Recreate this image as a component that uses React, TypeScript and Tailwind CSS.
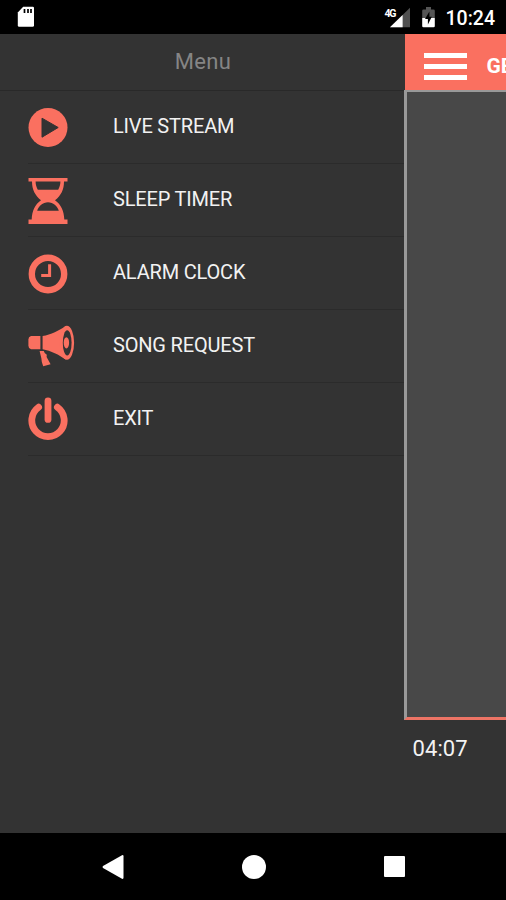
import React from 'react';

interface MenuItem {
    label: string;
    icon: React.ReactNode;
}

const menuItems: MenuItem[] = [
    {
        label: 'LIVE STREAM',
        icon: (
            <>
                <circle cx="20" cy="36.5" r="19.5" />
                <path d="M14 27.2 L30.2 36.5 L14 46.2Z" fill="#333333" stroke="#333333" strokeWidth="1" strokeLinejoin="round" />
            </>
        ),
    },
    {
        label: 'SLEEP TIMER',
        icon: (
            <path
                fillRule="evenodd"
                d="M.5 14H39.5V17.4H36C36 26 33 31 27 36.3C33 40.5 36 47 36.3 55.6H39.5V60H.5V55.6H3.7C4 47 7 40.5 13 36.3C7 31 4 26 4 17.4H.5ZM7.6 17.6C7.6 20.5 8.4 23.5 9.8 25.7H30.2C31.6 23.5 32.4 20.5 32.4 17.6ZM20 38.2C15 38.2 10.5 42 9.2 46.8H30.8C29.5 42 25 38.2 20 38.2Z"
            />
        ),
    },
    {
        label: 'ALARM CLOCK',
        icon: (
            <>
                <circle cx="20" cy="37" r="16.2" fill="none" stroke="#fa7060" strokeWidth="6.4" />
                <path d="M21.6 27.2V38.6H13.2" fill="none" stroke="#fa7060" strokeWidth="3" />
            </>
        ),
    },
    {
        label: 'SONG REQUEST',
        icon: (
            <>
                <path d="M3 26H12.4V39.2H3Q.4 38.6 .4 35.8V29.4Q.4 26.6 3 26Z" />
                <path d="M14.6 26C23 24.5 31 20.5 37.8 15.9V49.6C31 44.8 23 40.6 14.6 39.2Z" />
                <ellipse cx="38.9" cy="32.8" rx="7.2" ry="17" />
                <ellipse cx="39.2" cy="32.8" rx="4.4" ry="12.6" fill="#333333" />
                <ellipse cx="38.4" cy="32.8" rx="2.7" ry="5.6" />
                <path d="M11.6 41H15.8Q16.4 43.8 18.8 44.8L18.6 47L22.6 54.2L15.2 56.2Q13.4 52 13.4 48.5Z" />
            </>
        ),
    },
    {
        label: 'EXIT',
        icon: (
            <g fill="none" stroke="#fa7060" strokeWidth="6.8" strokeLinecap="round">
                <path d="M10.6 24.2A16.2 16.2 0 1 0 29.4 24.2" />
                <path d="M20 17.8V36.4" />
            </g>
        ),
    },
];

const StatusBar: React.FC = () => (
    <div className="flex h-[34px] items-center bg-black pl-[17px] pr-[11px] text-white">
        <svg width="18" height="22" viewBox="0 0 18 22">
            <path d="M6.2 .8H15.8Q17 .8 17 2V19.2Q17 20.8 15.6 20.8H2.2Q.8 20.8 .8 19.2V6.4Z" fill="white" />
            <path d="M7.5 3V7M11 3V7M14 3V7" stroke="black" strokeWidth="1.7" />
        </svg>
        <div className="flex-1" />
        <svg className="mr-[10px]" width="27" height="22" viewBox="0 0 27 22">
            <path d="M26 1.8V21.2H6Z" fill="#505050" />
            <path d="M18.6 8.9V21.2H6Z" fill="white" />
            <text x="0.5" y="10.5" fill="white" fontFamily="Roboto, sans-serif" fontSize="10.5" fontWeight="700" textLength="12">4G</text>
        </svg>
        <svg className="mr-[10px]" width="15" height="22" viewBox="0 0 15 22">
            <path d="M5 1H10V3.4H12.4Q13.8 3.4 13.8 4.8V12H1.2V4.8Q1.2 3.4 2.6 3.4H5Z" fill="#555555" />
            <path d="M1.2 12H13.8V20Q13.8 21.2 12.6 21.2H2.4Q1.2 21.2 1.2 20Z" fill="white" />
            <path d="M8.4 5.4L4 13H6.9V18.4L10.8 10.8H8.4Z" fill="black" />
        </svg>
        <span className="pt-[3px] text-[19.5px] font-medium leading-none">10:24</span>
    </div>
);

const Drawer: React.FC = () => (
    <nav className="w-[404px] shrink-0 bg-[#333333]">
        <h1 className="flex h-[57px] items-center justify-center border-b border-[#292929] text-[22px] text-[#858585]">
            <span className="pb-[2px] pl-[2px] tracking-[0.3px]">Menu</span>
        </h1>
        <ul className="pl-7">
            {menuItems.map((item) => (
                <li key={item.label} className="flex h-[73px] items-center border-b border-[#2b2b2b]">
                    <svg className="mr-[37px] shrink-0" width="48" height="72" viewBox="0 0 48 72" fill="#fa7060">
                        {item.icon}
                    </svg>
                    <span className="pb-[2px] text-[20px] leading-none tracking-[-0.18px] text-[#f2f2f2]">{item.label}</span>
                </li>
            ))}
        </ul>
    </nav>
);

const Player: React.FC = () => (
    <main className="flex min-w-0 flex-1 flex-col overflow-hidden bg-[#333333]">
        <header className="ml-px flex h-14 shrink-0 items-center bg-[#fa7060] pl-[18.5px]">
            <div className="flex shrink-0 flex-col gap-[6px] pt-2">
                <div className="h-[5px] w-[43px] bg-white" />
                <div className="h-[5px] w-[43px] bg-white" />
                <div className="h-[5px] w-[43px] bg-white" />
            </div>
            <span className="ml-[20px] whitespace-nowrap pt-[9px] text-[21px] font-bold leading-none text-white">GE</span>
        </header>
        <div className="h-[630px] shrink-0 border-b-[3px] border-l-[3px] border-t-2 border-b-[#ed7465] border-l-[#999999] border-t-[#999999] bg-[#484848]" />
        <time className="pl-[8.5px] pt-[18px] text-[22px] leading-none tracking-[0.1px] text-[#f2f2f2]">04:07</time>
    </main>
);

const NavigationBar: React.FC = () => (
    <div className="flex h-[67px] items-center justify-between bg-black pl-[102px] pr-[101px]">
        <svg width="22" height="26" viewBox="0 0 22 26" fill="white">
            <path d="M20 1.2Q21.5 .7 21.5 2.2V23.8Q21.5 25.3 20 24.8L1 14Q0 13 1 12Z" />
        </svg>
        <div className="size-6 rounded-full bg-white" />
        <div className="size-[21.5px] rounded-[1px] bg-white" />
    </div>
);

const App: React.FC = () => (
    <div className="flex h-[900px] w-[506px] flex-col overflow-hidden bg-[#333333] font-['Roboto',sans-serif]">
        <StatusBar />
        <div className="flex min-h-0 flex-1">
            <Drawer />
            <Player />
        </div>
        <NavigationBar />
    </div>
);

export default App;
